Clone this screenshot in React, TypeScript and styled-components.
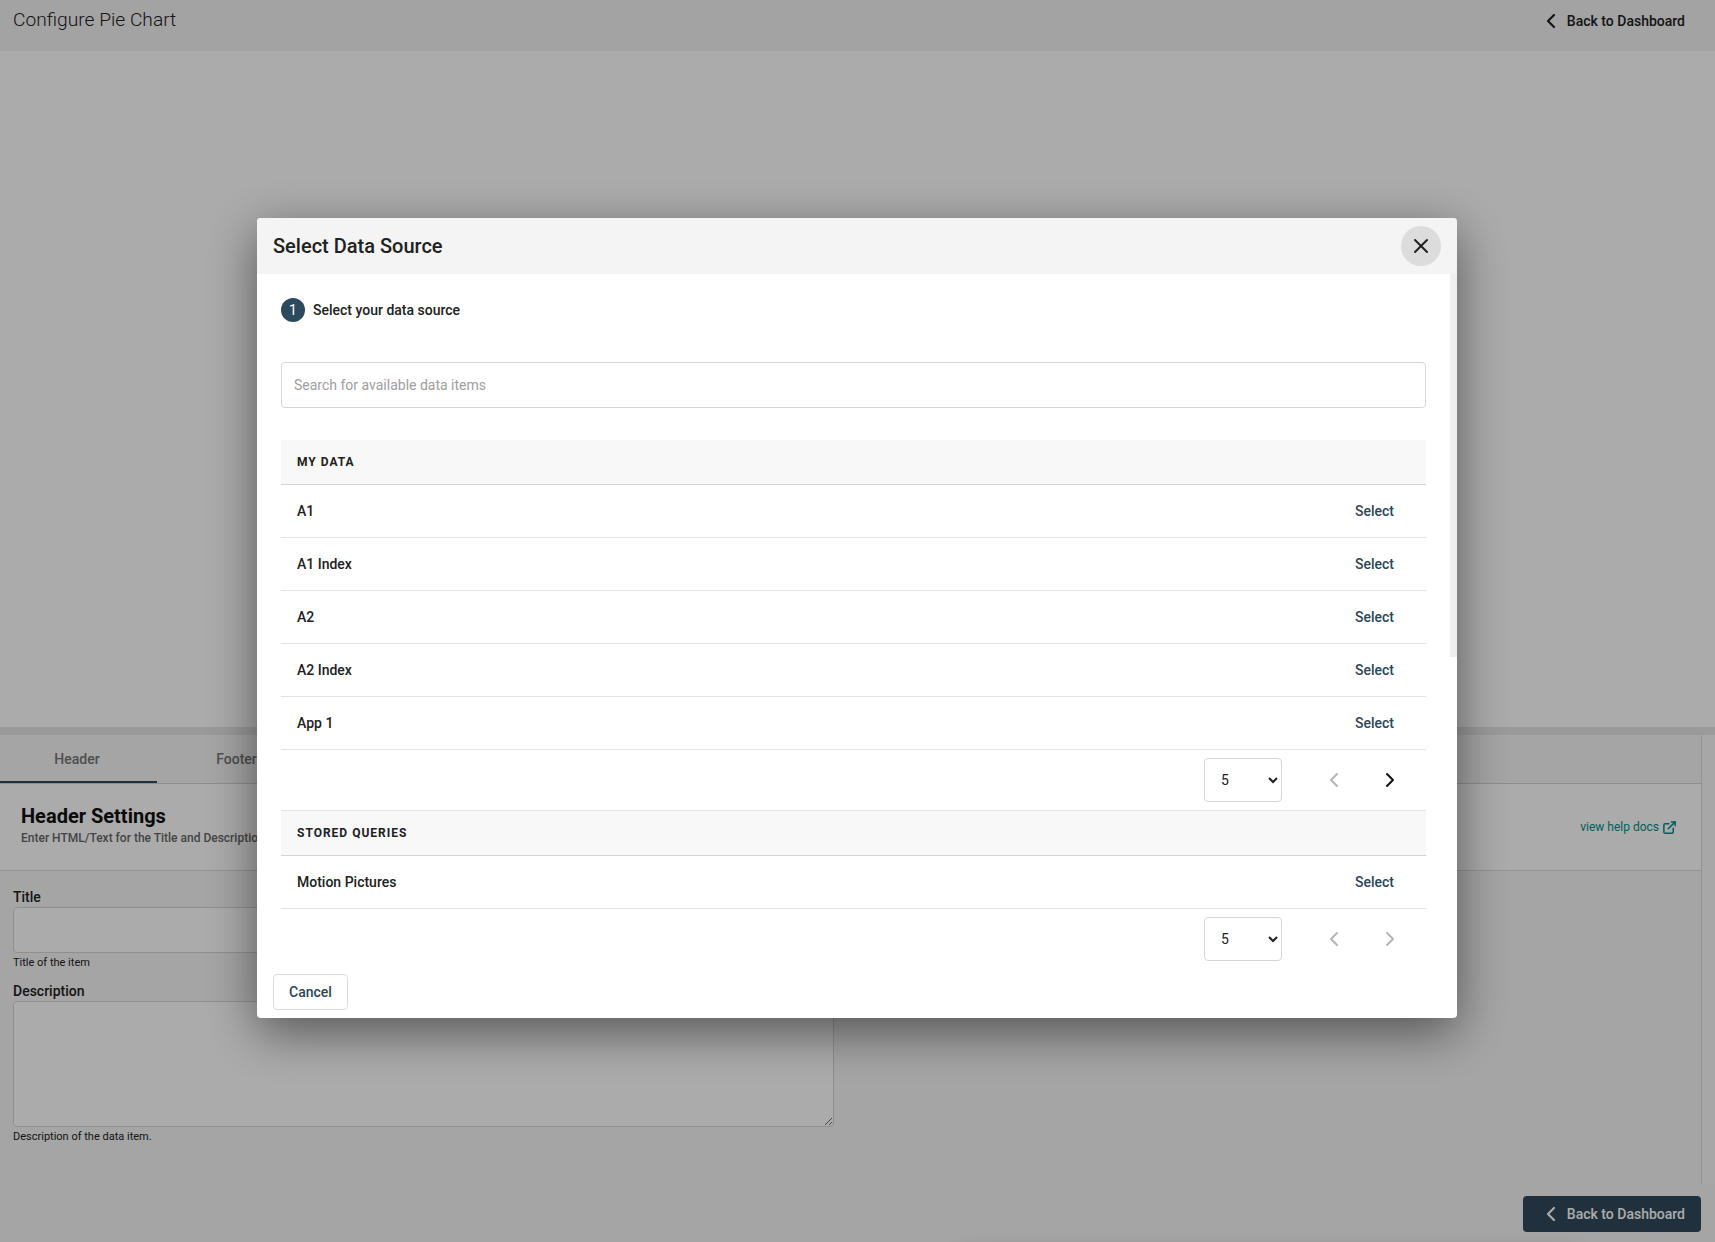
import React from "react";
import styled, { createGlobalStyle } from "styled-components";
import { ChevronLeft, ChevronRight, ExternalLink, X } from "lucide-react";

const GlobalStyle = createGlobalStyle`
  html, body {
    margin: 0;
    padding: 0;
    height: 100%;
    overflow: hidden;
    font-family: Roboto, "Liberation Sans", sans-serif;
    color: #212121;
  }
  * { box-sizing: border-box; }
`;

const Page = styled.div`
  display: flex;
  flex-direction: column;
  height: 1242px;
  background: #fff;
`;

const TopBar = styled.header`
  display: flex;
  align-items: center;
  justify-content: space-between;
  height: 51px;
  padding: 0 30px 11px 13px;
  background: #f3f3f3;
  flex: none;
`;

const PageTitle = styled.h1`
  margin: 0;
  font-size: 19.2px;
  font-weight: 300;
  line-height: 24px;
`;

const BackLink = styled.a`
  display: inline-flex;
  align-items: center;
  gap: 4px;
  font-size: 14px;
  font-weight: 500;
  color: #212121;
  padding-top: 2px;
`;

const PreviewArea = styled.main`
  flex: 1;
  background: #fff;
`;

const Splitter = styled.div`
  flex: none;
  height: 8px;
  background: #e6e6e6;
`;

const EditorPanel = styled.section`
  flex: none;
  display: flex;
  height: 449px;
  background: #f6f6f6;
`;

const EditorMain = styled.div`
  width: 1702px;
  flex: none;
  border-right: 1px solid #dcdcdc;
`;

const EditorRail = styled.div`
  flex: 1;
  background: #fafafa;
`;

const Tabs = styled.nav`
  display: flex;
  height: 49px;
  border-bottom: 1px solid #d4d4d4;
`;

const Tab = styled.div<{ $active?: boolean }>`
  width: 157px;
  display: flex;
  align-items: center;
  justify-content: center;
  font-size: 14px;
  font-weight: 500;
  padding: ${({ $active }) => ($active ? "2px 3px 0 0" : "0 0 0 2px")};
  color: #757575;
  border-bottom: ${({ $active }) => ($active ? "2px solid #2c4a5e" : "none")};
`;

const SettingsHeader = styled.div`
  display: flex;
  align-items: center;
  justify-content: space-between;
  height: 87px;
  padding: 0 24px 0 21px;
  background: #fff;
  border-bottom: 1px solid #dcdcdc;
`;

const SettingsText = styled.div`
  padding-bottom: 5px;
`;

const SettingsTitle = styled.h2`
  margin: 0 0 3px;
  font-size: 20px;
  line-height: 24px;
  font-weight: 700;
  color: #111;
`;

const SettingsSub = styled.p`
  margin: 0;
  font-size: 12px;
  line-height: 14px;
  font-weight: 500;
  color: #666;
`;

const HelpLink = styled.a`
  display: inline-flex;
  align-items: center;
  gap: 3px;
  font-size: 12px;
  color: #009088;
`;

const Form = styled.div`
  display: flex;
  flex-direction: column;
  width: 821px;
  margin-left: 13px;
  padding-top: 17px;
`;

const FieldLabel = styled.label`
  font-size: 14px;
  font-weight: 500;
  line-height: 19px;
  color: #212121;
`;

const TextField = styled.input`
  display: block;
  width: 100%;
  height: 46px;
  border: 1px solid #d6d6d6;
  border-radius: 4px;
  background: #fff;
`;

const TextArea = styled.textarea`
  display: block;
  width: 100%;
  height: 126px;
  border: 1px solid #d6d6d6;
  border-radius: 4px;
  background: #fff;
`;

const Hint = styled.small`
  display: block;
  font-size: 11px;
  line-height: 14px;
  margin: 3px 0 12px;
  color: #212121;
`;

const BottomBar = styled.footer`
  flex: none;
  display: flex;
  align-items: center;
  justify-content: flex-end;
  height: 58px;
  padding: 2px 14px 0 0;
  background: #f6f6f6;
`;

const PrimaryButton = styled.button`
  display: inline-flex;
  align-items: center;
  gap: 4px;
  height: 36px;
  padding: 0 16px 0 16px;
  border: none;
  border-radius: 4px;
  background: #31495b;
  color: #fff;
  font: 500 14px Roboto, sans-serif;
`;

const Backdrop = styled.div`
  position: fixed;
  inset: 0;
  display: flex;
  justify-content: center;
  align-items: flex-start;
  padding: 218px 1px 0 0;
  background: rgba(0, 0, 0, 0.33);
  overflow: hidden;
`;

const OffscreenShadow = styled.div`
  position: absolute;
  left: 960px;
  top: 1262px;
  width: 620px;
  height: 40px;
  box-shadow: 0 0 30px rgba(0, 0, 0, 0.4);
`;

const Modal = styled.div`
  position: relative;
  display: flex;
  flex-direction: column;
  width: 1200px;
  height: 800px;
  background: #fff;
  border-radius: 4px;
  overflow: hidden;
`;

const ModalShadow = styled.div`
  border-radius: 4px;
  box-shadow: 0 14px 50px rgba(0, 0, 0, 0.5);
`;

const ModalHeader = styled.div`
  flex: none;
  display: flex;
  align-items: center;
  justify-content: space-between;
  height: 56px;
  padding: 0 16px;
  background: #f4f4f4;
`;

const ModalTitle = styled.h3`
  margin: 0;
  font-size: 20px;
  font-weight: 500;
  color: #212121;
`;

const CloseButton = styled.button`
  display: flex;
  align-items: center;
  justify-content: center;
  width: 40px;
  height: 40px;
  padding: 0;
  border: none;
  border-radius: 50%;
  background: #dcdcdc;
  color: #212121;
`;

const ModalBody = styled.div`
  flex: none;
  height: 692px;
  overflow: hidden;
  padding: 24px 31px 0 24px;
`;

const ScrollThumb = styled.div`
  position: absolute;
  top: 56px;
  right: 0;
  width: 7px;
  height: 383px;
  background: #efefef;
`;

const StepRow = styled.div`
  display: flex;
  align-items: center;
  gap: 8px;
  height: 24px;
  margin-bottom: 40px;
`;

const StepBadge = styled.span`
  display: flex;
  align-items: center;
  justify-content: center;
  width: 24px;
  height: 24px;
  border-radius: 50%;
  background: #2c4a5e;
  color: #fff;
  font-size: 14px;
`;

const StepLabel = styled.span`
  font-size: 14px;
  font-weight: 500;
`;

const SearchInput = styled.input`
  display: block;
  width: 100%;
  height: 46px;
  padding: 0 12px;
  border: 1px solid #d6d6d6;
  border-radius: 4px;
  font: 400 14px Roboto, sans-serif;
  margin-bottom: 32px;
  &::placeholder { color: #9e9e9e; opacity: 1; }
`;

const SectionHead = styled.div`
  display: flex;
  align-items: center;
  height: 45px;
  padding-left: 16px;
  background: #f8f8f8;
  border-bottom: 1px solid #d4d4d4;
  font-size: 12px;
  font-weight: 700;
  letter-spacing: 1px;
  color: #212121;
`;

const DataRow = styled.div`
  display: flex;
  align-items: center;
  justify-content: space-between;
  height: 53px;
  padding: 0 32px 0 16px;
  border-bottom: 1px solid #e3e3e3;
  font-size: 14px;
  font-weight: 500;
`;

const SelectLink = styled.a`
  color: #2c4658;
  font-weight: 500;
`;

const Pager = styled.div`
  display: flex;
  align-items: center;
  justify-content: flex-end;
  gap: 32px;
  height: 61px;
  padding: 0 24px 1px 0;
  border-bottom: 1px solid #e3e3e3;
`;

const LastPager = styled(Pager)`
  border-bottom: none;
  padding-bottom: 2px;
`;

const PageSize = styled.select`
  width: 78px;
  height: 44px;
  padding-left: 12px;
  border: 1px solid #d6d6d6;
  border-radius: 4px;
  background: #fff;
  color: #212121;
  font: 400 14px Roboto, sans-serif;
  margin-right: 8px;
`;

const PagerIcon = styled.span<{ $off?: boolean }>`
  display: flex;
  padding-top: 1px;
  color: ${({ $off }) => ($off ? "#b5b5b5" : "#111")};
`;

const ModalFooter = styled.div`
  flex: 1;
  display: flex;
  align-items: flex-start;
  padding: 8px 16px 0;
`;

const CancelButton = styled.button`
  width: 75px;
  height: 36px;
  background: #fff;
  border: 1px solid #dcdcdc;
  border-radius: 4px;
  color: #2c4658;
  font: 500 14px Roboto, sans-serif;
`;

const rows = ["A1", "A1 Index", "A2", "A2 Index", "App 1"];

const PagerRow: React.FC<{ nextOff?: boolean; last?: boolean }> = ({ nextOff, last }) => {
  const Row = last ? LastPager : Pager;
  return (
    <Row>
      <PageSize defaultValue="5">
        <option>5</option>
        <option>10</option>
      </PageSize>
      <PagerIcon $off>
        <ChevronLeft size={24} strokeWidth={2} />
      </PagerIcon>
      <PagerIcon $off={nextOff}>
        <ChevronRight size={24} strokeWidth={2} />
      </PagerIcon>
    </Row>
  );
};

const App: React.FC = () => (
  <>
    <GlobalStyle />
    <Page>
      <TopBar>
        <PageTitle>Configure Pie Chart</PageTitle>
        <BackLink>
          <ChevronLeft size={24} strokeWidth={2.2} />
          Back to Dashboard
        </BackLink>
      </TopBar>
      <PreviewArea />
      <Splitter />
      <EditorPanel>
        <EditorMain>
          <Tabs>
            <Tab $active>Header</Tab>
            <Tab>Footer</Tab>
          </Tabs>
          <SettingsHeader>
            <SettingsText>
              <SettingsTitle>Header Settings</SettingsTitle>
              <SettingsSub>Enter HTML/Text for the Title and Description</SettingsSub>
            </SettingsText>
            <HelpLink>
              view help docs
              <ExternalLink size={15} strokeWidth={2.4} />
            </HelpLink>
          </SettingsHeader>
          <Form>
            <FieldLabel>Title</FieldLabel>
            <TextField />
            <Hint>Title of the item</Hint>
            <FieldLabel>Description</FieldLabel>
            <TextArea />
            <Hint>Description of the data item.</Hint>
          </Form>
        </EditorMain>
        <EditorRail />
      </EditorPanel>
      <BottomBar>
        <PrimaryButton>
          <ChevronLeft size={24} strokeWidth={2.2} />
          Back to Dashboard
        </PrimaryButton>
      </BottomBar>
    </Page>
    <Backdrop>
      <OffscreenShadow />
      <ModalShadow>
        <Modal>
          <ModalHeader>
            <ModalTitle>Select Data Source</ModalTitle>
            <CloseButton>
              <X size={24} strokeWidth={2} />
            </CloseButton>
          </ModalHeader>
          <ModalBody>
            <StepRow>
              <StepBadge>1</StepBadge>
              <StepLabel>Select your data source</StepLabel>
            </StepRow>
            <SearchInput placeholder="Search for available data items" />
            <SectionHead>MY DATA</SectionHead>
            {rows.map((row) => (
              <DataRow key={row}>
                {row}
                <SelectLink>Select</SelectLink>
              </DataRow>
            ))}
            <PagerRow />
            <SectionHead>STORED QUERIES</SectionHead>
            <DataRow>
              Motion Pictures
              <SelectLink>Select</SelectLink>
            </DataRow>
            <PagerRow nextOff last />
          </ModalBody>
          <ScrollThumb />
          <ModalFooter>
            <CancelButton>Cancel</CancelButton>
          </ModalFooter>
        </Modal>
      </ModalShadow>
    </Backdrop>
  </>
);

export default App;
